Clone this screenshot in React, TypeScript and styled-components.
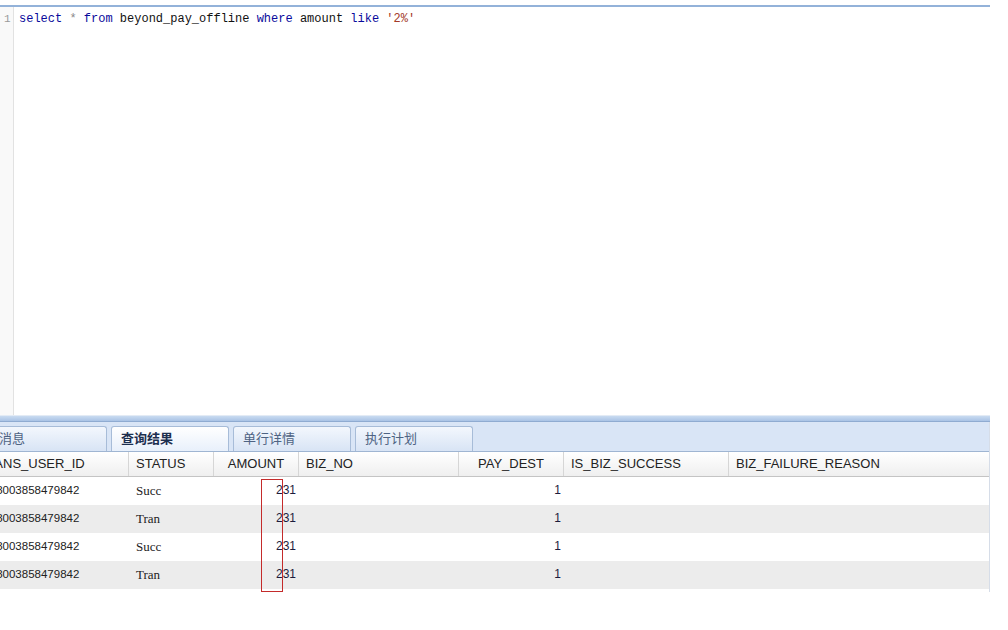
import React from 'react';
import styled, { createGlobalStyle } from 'styled-components';

const GlobalStyle = createGlobalStyle`
  html, body {
    margin: 0;
    padding: 0;
    background: #ffffff;
    width: 1008px;
    height: 630px;
    overflow: hidden;
  }
`;

const Frame = styled.div`
  width: 990px;
  padding-top: 5px;
  display: flex;
  flex-direction: column;
`;

const Editor = styled.div`
  height: 408px;
  display: flex;
  border-top: 2px solid #93b2d9;
  background: #ffffff;
`;

const Gutter = styled.div`
  width: 14px;
  flex: none;
  background: #f9f9f9;
  border-right: 1px solid #e2e2e2;
  font-family: 'Liberation Mono', monospace;
  font-size: 11px;
  color: #9a9a9a;
  padding: 4px 0 0 4px;
  box-sizing: border-box;
  line-height: 16px;
`;

const Code = styled.pre`
  margin: 0;
  padding: 4px 0 0 5px;
  font-family: 'Liberation Mono', monospace;
  font-size: 12px;
  line-height: 16px;
  color: #111;
`;

const Kw = styled.span`
  color: #0a0a9c;
`;
const Op = styled.span`
  color: #8a8a8a;
`;
const Str = styled.span`
  color: #a33a2a;
`;

const Splitter = styled.div`
  height: 7px;
  border-top: 1px solid #e3ebf5;
  background: linear-gradient(#c9dbf1, #a9c3e5);
  border-bottom: 1px solid #8fabd1;
  box-sizing: border-box;
`;

const Results = styled.div`
  position: relative;
  overflow: hidden;
  border-right: 1px solid #d6dde8;
  height: 170px;
`;

const TabBar = styled.div`
  height: 30px;
  background: #d9e5f6;
  border-bottom: 1px solid #9fb5d2;
  display: flex;
  align-items: flex-end;
  gap: 4px;
  box-sizing: border-box;
  margin-left: -11px;
`;

const Tab = styled.div<{ $active?: boolean }>`
  width: 118px;
  height: 25px;
  box-sizing: border-box;
  border: 1px solid #a7bcd8;
  border-bottom: none;
  border-radius: 3px 3px 0 0;
  background: ${p => (p.$active ? 'linear-gradient(#ffffff, #e8f0fb)' : 'linear-gradient(#f3f7fd, #d8e4f5)')};
  font-family: 'Noto Sans CJK SC', 'Liberation Sans', sans-serif;
  font-size: 13px;
  font-weight: ${p => (p.$active ? 700 : 400)};
  color: ${p => (p.$active ? '#1d2f4f' : '#4e6383')};
  padding-left: 9px;
  line-height: 21px;
`;

const Grid = styled.div`
  margin-left: -30px;
  display: flex;
  flex-direction: column;
`;

const HeaderRow = styled.div`
  display: flex;
  height: 25px;
  background: linear-gradient(#ffffff, #efefef);
  border-bottom: 1px solid #c4c4c4;
  box-sizing: border-box;
`;

const HeadCell = styled.div<{ $w: number; $align?: string }>`
  width: ${p => p.$w}px;
  flex: none;
  box-sizing: border-box;
  border-right: 1px solid #d6d6d6;
  padding: 0 7px;
  text-align: ${p => p.$align || 'left'};
  font-family: 'Liberation Sans', Arial, sans-serif;
  font-size: 13px;
  line-height: 24px;
  color: #222;
  white-space: nowrap;
  overflow: hidden;
`;

const Row = styled.div<{ $odd: boolean }>`
  display: flex;
  height: 28px;
  background: ${p => (p.$odd ? '#ececec' : '#ffffff')};
`;

type Kind = 'text' | 'serif' | 'num';

const Cell = styled.div<{ $w: number; $kind: Kind }>`
  width: ${p => p.$w}px;
  flex: none;
  box-sizing: border-box;
  padding: ${p => (p.$kind === 'num' ? '0 3px 0 7px' : '0 7px')};
  text-align: ${p => (p.$kind === 'num' ? 'right' : 'left')};
  font-family: ${p => (p.$kind === 'serif' ? "'Liberation Serif', serif" : "'Liberation Sans', Arial, sans-serif")};
  font-size: ${p => (p.$kind === 'serif' ? '13px' : p.$kind === 'num' ? '12px' : '11.5px')};
  line-height: 27px;
  color: ${p => (p.$kind === 'num' ? '#1c1c3c' : '#222')};
  white-space: nowrap;
  overflow: hidden;
`;

const Mark = styled.div`
  position: absolute;
  left: 261px;
  top: 57px;
  width: 22px;
  height: 113px;
  box-sizing: border-box;
  border: 1px solid #c42b2b;
  pointer-events: none;
`;

const columns: { name: string; w: number; head?: string; kind: Kind }[] = [
  { name: 'TRANS_USER_ID', w: 159, kind: 'text' },
  { name: 'STATUS', w: 85, kind: 'serif' },
  { name: 'AMOUNT', w: 85, head: 'center', kind: 'num' },
  { name: 'BIZ_NO', w: 160, kind: 'text' },
  { name: 'PAY_DEST', w: 105, head: 'center', kind: 'num' },
  { name: 'IS_BIZ_SUCCESS', w: 165, kind: 'text' },
  { name: 'BIZ_FAILURE_REASON', w: 285, kind: 'text' },
];

const rows = [
  ['2088003858479842', 'Succ', '231', '', '1', '', ''],
  ['2088003858479842', 'Tran', '231', '', '1', '', ''],
  ['2088003858479842', 'Succ', '231', '', '1', '', ''],
  ['2088003858479842', 'Tran', '231', '', '1', '', ''],
];

export default function App() {
  return (
    <>
      <GlobalStyle />
      <Frame>
        <Editor>
          <Gutter>1</Gutter>
          <Code>
            <Kw>select</Kw> <Op>*</Op> <Kw>from</Kw> beyond_pay_offline <Kw>where</Kw> amount <Kw>like</Kw>{' '}
            <Str>'2%'</Str>
          </Code>
        </Editor>
        <Splitter />
        <Results>
          <TabBar>
            <Tab>消息</Tab>
            <Tab $active>查询结果</Tab>
            <Tab>单行详情</Tab>
            <Tab>执行计划</Tab>
          </TabBar>
          <Grid>
            <HeaderRow>
              {columns.map(c => (
                <HeadCell key={c.name} $w={c.w} $align={c.head}>
                  {c.name}
                </HeadCell>
              ))}
            </HeaderRow>
            {rows.map((r, i) => (
              <Row key={i} $odd={i % 2 === 1}>
                {r.map((v, j) => (
                  <Cell key={j} $w={columns[j].w} $kind={columns[j].kind}>
                    {v}
                  </Cell>
                ))}
              </Row>
            ))}
          </Grid>
          <Mark />
        </Results>
      </Frame>
    </>
  );
}
